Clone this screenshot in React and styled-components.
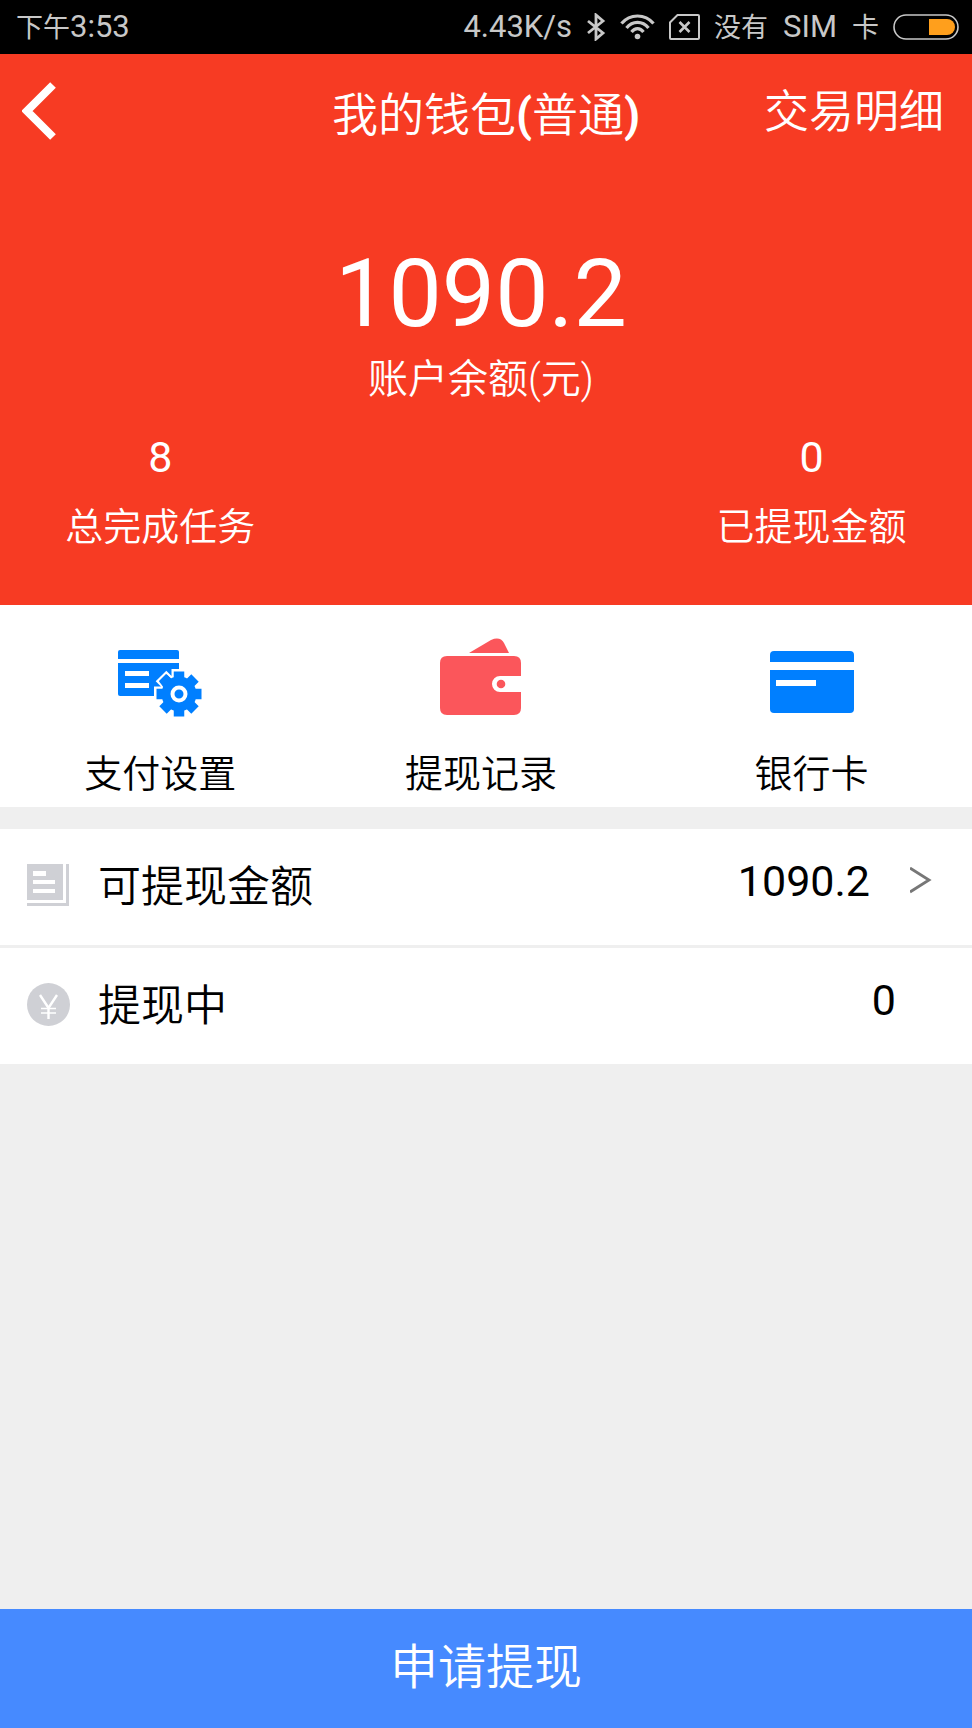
import React from 'react';
import styled, { createGlobalStyle } from 'styled-components';

const GlobalStyle = createGlobalStyle`
  * {
    box-sizing: border-box;
  }
  body {
    margin: 0;
    background-color: #efefef;
    font-family: Roboto, 'Noto Sans CJK SC', sans-serif;
    font-weight: 350;
  }
  button {
    border: none;
    padding: 0;
    background: none;
    font-family: inherit;
    font-weight: inherit;
    cursor: pointer;
  }
  a {
    color: inherit;
    text-decoration: none;
  }
`;

const BluetoothIcon = () => (
  <svg width="20" height="28" viewBox="0 0 20 28" fill="none" stroke="#c8c8c8" strokeWidth="2.8">
    <path d="M2 8 L17 20 L10 26 V2 L17 8 L2 20" />
  </svg>
);

const WifiIcon = () => (
  <svg width="35" height="26" viewBox="0 0 35 26" fill="none" stroke="#c8c8c8" strokeWidth="3.2">
    <path d="M1.5 9.5 C10 -0.5 25 -0.5 33.5 9.5" />
    <path d="M6.5 14 C12.5 6.5 22.5 6.5 28.5 14" />
    <path d="M11.5 18 C15 13.5 20 13.5 23.5 18" />
    <circle cx="17.5" cy="22.5" r="2.8" fill="#c8c8c8" stroke="none" />
  </svg>
);

const NoSimIcon = () => (
  <svg width="31" height="26" viewBox="0 0 31 26" fill="none" stroke="#c8c8c8" strokeWidth="2">
    <path d="M8.5 1 H29 Q30 1 30 2 V24 Q30 25 29 25 H2 Q1 25 1 24 V8.5 Z" />
    <path d="M10.5 8 L20.5 18 M20.5 8 L10.5 18" strokeWidth="2.6" />
  </svg>
);

const BatteryIcon = () => (
  <svg width="66" height="26" viewBox="0 0 66 26">
    <rect x="1" y="1" width="64" height="24" rx="12" fill="none" stroke="#c8c8c8" strokeWidth="1.6" />
    <path d="M36 5 H54 A8 8 0 0 1 54 21 H36 Z" fill="#ff9f1c" />
  </svg>
);

const BackIcon = () => (
  <svg width="36" height="60" viewBox="0 0 36 60" fill="none" stroke="#fff" strokeWidth="8">
    <path d="M31 4 L5 30 L31 56" />
  </svg>
);

const PaySettingsIcon = () => (
  <svg width="84" height="84" viewBox="0 0 84 84">
    <path d="M0 22 V15 Q0 13 2 13 H59 Q61 13 61 15 V22 Z" fill="#007fff" />
    <path d="M0 26 H61 V56 Q61 59 58 59 H2 Q0 59 0 57 Z" fill="#007fff" />
    <path d="M7 34 H31 V39 H7 Z M7 46 H31 V51 H7 Z" fill="#fff" />
    <g stroke="#fff" strokeWidth="15" fill="#fff">
      <path d="M61 32 V82 M36 57 H86 M43 39 L79 75 M79 39 L43 75" />
    </g>
    <path d="M41 44 L48 37 L58 46 L48 54 Z" fill="#007fff" />
    <g stroke="#007fff" strokeWidth="10.5">
      <path d="M61 34.5 V79.5 M38.5 57 H83.5 M45 41 L77 73 M77 41 L45 73" />
      <circle cx="61" cy="57" r="12.5" fill="none" strokeWidth="10" />
    </g>
    <circle cx="61" cy="57" r="6.5" fill="#007fff" stroke="#fff" strokeWidth="4" />
  </svg>
);

const WalletIcon = () => (
  <svg width="84" height="84" viewBox="0 0 84 84">
    <path d="M30 16 L52 3 Q61 -1 65 6 L70 16 Z" fill="#fb565b" />
    <path
      d="M8 19 H75 Q82 19 82 26 V39 H61 A8 8 0 0 0 61 55 H82 V71 Q82 78 75 78 H8 Q1 78 1 71 V26 Q1 19 8 19 Z"
      fill="#fb565b"
    />
    <circle cx="62" cy="47" r="4.3" fill="#fb565b" />
  </svg>
);

const CardIcon = () => (
  <svg width="84" height="84" viewBox="0 0 84 84">
    <path d="M0 25 V18 Q0 14 4 14 H80 Q84 14 84 18 V25 Z" fill="#007fff" />
    <path d="M0 33 H84 V72 Q84 76 80 76 H4 Q0 76 0 72 Z" fill="#007fff" />
    <path d="M6 43 H46 V49 H6 Z" fill="#fff" />
  </svg>
);

const BillIcon = () => (
  <svg width="43" height="43" viewBox="0 0 43 43" fill="#cfd0d5">
    <path d="M0 0 H36 V36 H0 Z" />
    <path d="M39 0 H42 V42 H0 V39 H39 Z" />
    <path d="M6 7 H19 V12 H6 Z M6 16 H28 V20 H6 Z M6 25 H28 V29 H6 Z" fill="#fff" />
  </svg>
);

const YenIcon = () => (
  <svg width="43" height="43" viewBox="0 0 43 43" fill="none" stroke="#fff">
    <circle cx="21.5" cy="21.5" r="21.5" fill="#cfd0d5" stroke="none" />
    <path d="M13 12 L21.5 25 L30 12 M21.5 25 V36" strokeWidth="2.4" />
    <path d="M14 25.5 H29 M14 30 H29" strokeWidth="1.6" />
  </svg>
);

const ArrowIcon = () => (
  <svg width="22" height="28" viewBox="0 0 22 28" fill="none" stroke="#777" strokeWidth="2.8">
    <path d="M0 1 L19 13 L0 25" />
  </svg>
);

const menus = [
  { name: '支付设置', icon: <PaySettingsIcon /> },
  { name: '提现记录', icon: <WalletIcon /> },
  { name: '银行卡', icon: <CardIcon /> },
];

const App = () => {
  return (
    <Page>
      <GlobalStyle />
      <StatusBar>
        <StatusText>下午<Latin>3:53</Latin></StatusText>
        <StatusIcons>
          <Latin>4.43K/s</Latin>
          <BluetoothIcon />
          <WifiIcon />
          <NoSimIcon />
          <SimText>
            <span>没有</span>
            <Latin>SIM</Latin>
            <span>卡</span>
          </SimText>
          <BatteryIcon />
        </StatusIcons>
      </StatusBar>
      <Header>
        <NavBar>
          <BackButton aria-label="返回"><BackIcon /></BackButton>
          <Title>我的钱包<b>(</b>普通<b>)</b></Title>
          <DetailLink href="#detail">交易明细</DetailLink>
        </NavBar>
        <Balance>
          <Amount>1090.2</Amount>
          <AmountLabel>账户余额(元)</AmountLabel>
        </Balance>
        <Columns>
          <Stat>
            <Number>8</Number>
            <Label>总完成任务</Label>
          </Stat>
          <Stat>
            <Number>0</Number>
            <Label>已提现金额</Label>
          </Stat>
        </Columns>
      </Header>
      <MenuColumns>
        {menus.map((menu) => (
          <MenuButton key={menu.name}>
            {menu.icon}
            <Label>{menu.name}</Label>
          </MenuButton>
        ))}
      </MenuColumns>
      <List>
        <Row href="#available">
          <RowIcon><BillIcon /></RowIcon>
          <RowName>可提现金额</RowName>
          <RowValue>
            <Number>1090.2</Number>
            <ArrowIcon />
          </RowValue>
        </Row>
        <Row as="div">
          <RowIcon><YenIcon /></RowIcon>
          <RowName>提现中</RowName>
          <RowValue $noArrow>
            <Number>0</Number>
          </RowValue>
        </Row>
      </List>
      <ApplyButton>申请提现</ApplyButton>
    </Page>
  );
};

const Page = styled.div`
  min-height: 100vh;
  display: flex;
  flex-direction: column;
`;

const StatusBar = styled.div`
  height: 54px;
  padding: 0 13px 0 16px;
  display: flex;
  justify-content: space-between;
  align-items: center;
  background-color: black;
  color: #c8c8c8;
  font-size: 27px;
  font-weight: 400;
  line-height: 32px;
`;

const StatusText = styled.div`
  display: flex;
  align-items: baseline;
`;

const StatusIcons = styled.div`
  display: flex;
  align-items: center;
  gap: 14px;
`;

const SimText = styled.div`
  display: flex;
  align-items: baseline;
  gap: 15px;
`;

const Latin = styled.span`
  font-size: 31px;
`;

const Header = styled.header`
  padding-bottom: 50px;
  background-color: #f73b23;
  color: white;
`;

const NavBar = styled.nav`
  height: 118px;
  padding: 0 22px;
  display: grid;
  grid-template-columns: 1fr auto 1fr;
  align-items: center;
  font-size: 45px;
  line-height: 60px;
`;

const BackButton = styled.button`
  && {
    display: flex;
    justify-self: start;
    padding-bottom: 4px;
  }
`;

const Title = styled.h1`
  margin: 0;
  padding-top: 4px;
  font-size: 46px;
  font-weight: inherit;
`;

const DetailLink = styled.a`
  justify-self: end;
  padding-right: 6px;
`;

const Balance = styled.div`
  padding: 66px 10px 0 0;
  text-align: center;
`;

const Amount = styled.div`
  font-size: 95px;
  font-weight: 400;
  line-height: 112px;
`;

const AmountLabel = styled.div`
  font-size: 40px;
  line-height: 60px;
`;

const Columns = styled.div`
  display: flex;
  justify-content: space-between;
  padding-top: 21px;
`;

const Stat = styled.div`
  width: 33%;
  display: flex;
  flex-direction: column;
  align-items: center;
  gap: 16px;
`;

const Number = styled.span`
  font-size: 43px;
  font-weight: 400;
  line-height: 52px;
`;

const Label = styled.span`
  font-size: 38px;
  line-height: 56px;
`;

const MenuColumns = styled.div`
  display: flex;
  padding: 32px 0 5px;
  background-color: white;
`;

const MenuButton = styled.button`
  width: 33%;
  display: flex;
  flex-direction: column;
  align-items: center;
  gap: 25px;
  color: black;
  &:last-child {
    margin-left: auto;
  }
`;

const List = styled.div`
  margin-top: 22px;
  display: flex;
  flex-direction: column;
  gap: 3px;
`;

const Row = styled.a`
  height: 116px;
  padding: 0 40px 0 27px;
  display: flex;
  align-items: center;
  background-color: white;
  color: black;
`;

const RowIcon = styled.span`
  display: flex;
  padding-bottom: 4px;
`;

const RowName = styled.span`
  margin-left: 28px;
  font-size: 43px;
  line-height: 56px;
`;

const RowValue = styled.div`
  margin-left: auto;
  padding: 0 ${({ $noArrow }) => ($noArrow ? '36px' : '0')} 12px 0;
  display: flex;
  align-items: center;
  gap: 40px;
`;

const ApplyButton = styled.button`
  && {
    margin-top: auto;
    height: 119px;
    padding-bottom: 12px;
    background-color: #468aff;
    color: white;
    font-size: 48px;
  }
`;

export default App;
